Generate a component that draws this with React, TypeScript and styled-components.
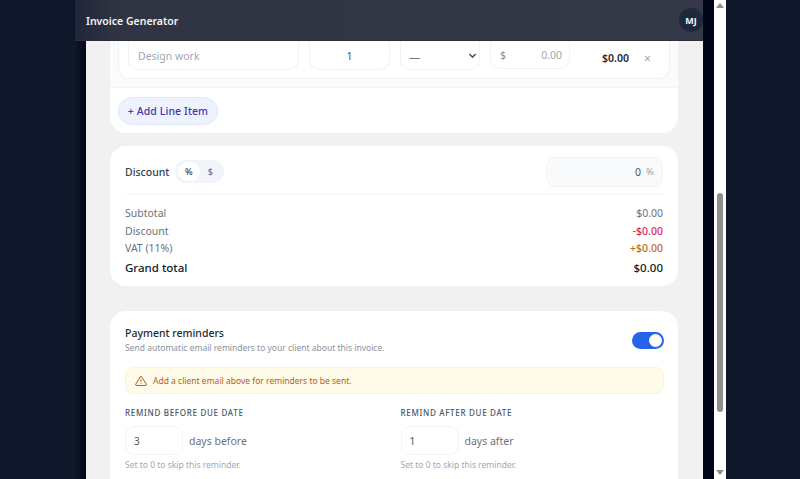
import React from "react";
import styled, { createGlobalStyle } from "styled-components";

const Global = createGlobalStyle`
  html, body { margin: 0; padding: 0; height: 100%; overflow: hidden; }
  body { background: #0f172a; font-family: "Noto Sans", "Open Sans", sans-serif; color: #1f2937; }
  * { box-sizing: border-box; }
`;

const Stage = styled.div`
  width: 800px; height: 479px; overflow: hidden; display: flex; background: #0f172a;
`;
const LeftShade = styled.div`
  width: 86px; height: 100%; flex: none;
  background: linear-gradient(90deg, #0f172a 0, #0f172a 74px, #0a1020 80px, #020617 86px);
`;
const Modal = styled.div`
  width: 617px; height: 100%; flex: none; display: flex; flex-direction: column; background: #f1f1f1; position: relative;
`;
const Header = styled.header`
  height: 41px; flex: none; margin-left: -11px; padding: 0 0 0 11px; display: flex; align-items: center;
  justify-content: space-between; background: linear-gradient(90deg, #20263a 0, #2f3342 40px, #353947 100%);
  position: relative; border-bottom: 1px solid #2b2f3b;
`;
const Brand = styled.div`
  font-size: 10.5px; font-weight: 600; color: #f4f5f7; line-height: 14px; margin-top: 1px;
`;
const Avatar = styled.div`
  width: 24px; height: 24px; margin-right: 0; border-radius: 50%; background: #1e293b; color: #f4f6f9;
  font-size: 9px; font-weight: 700; display: flex; align-items: center; justify-content: center;
`;
const Scroll = styled.main`
  flex: 1; min-height: 0; overflow: hidden; padding: 0 25px 0 24px; display: flex; flex-direction: column;
`;
const Card = styled.section`
  background: #fff; border-radius: 16px; flex: none;
`;
const ItemsCard = styled(Card)`
  border-radius: 0 0 16px 16px; height: 92px; margin-bottom: 13px;
`;
const RowsBand = styled.div`
  height: 47px; background: #fafbfc; padding: 0 8px; border-bottom: 1px solid #f3f4f6;
`;
const ItemRow = styled.div`
  height: 38px; background: #fff; border: 1px solid #f0f2f5; border-top: none; border-radius: 0 0 12px 12px;
  padding: 0 9px; display: flex; gap: 10px; align-items: flex-start;
`;
const FieldBox = styled.div<{ $w: number; $h?: number }>`
  width: ${(p) => p.$w}px; height: ${(p) => p.$h ?? 29}px; flex: none; background: #fff; border: 1px solid #f1f3f6;
  border-radius: 0 0 10px 10px; border-top: none; display: flex; align-items: center; font-size: 10px; color: #475569;
`;
const Placeholder = styled.span`
  color: #a3a8b0; padding-left: 9px; font-size: 10.5px; margin-top: 2px;
`;
const Qty = styled.span`
  width: 100%; text-align: center; color: #4b5563; font-size: 10.5px; margin-top: 2px;
`;
const SelectValue = styled.span`
  flex: 1; padding-left: 8px; color: #6b7280; font-size: 11px; margin-top: 2px;
`;
const Chevron = styled.svg`
  width: 9px; height: 9px; margin-right: 2px; margin-top: 0; color: #4b5563; flex: none;
`;
const Currency = styled.span`
  color: #8b9099; padding-left: 9px; font-size: 10.5px;
`;
const PriceValue = styled.span`
  flex: 1; text-align: right; padding-right: 7px; color: #a3a8b0; font-size: 10.5px;
`;
const Amount = styled.span`
  width: 49px; margin-left: 0; text-align: right; font-size: 10.5px; font-weight: 600; color: #1f2937; flex: none; line-height: 14px; margin-top: 10px;
`;
const Remove = styled.span`
  margin-left: 5px; color: #9ca3af; font-size: 12px; line-height: 14px; margin-top: 11px; flex: none;
`;
const AddWrap = styled.div`
  padding: 9px 8px 0;
`;
const AddButton = styled.button`
  width: 100px; height: 28px; padding: 0; border: 1px solid #dfe5fa; border-radius: 14px; background: #eef2ff;
  color: #4338a8; font: 500 10.5px "Noto Sans", sans-serif; letter-spacing: 0.1px;
`;
const TotalsCard = styled(Card)`
  height: 140px; padding: 11px 15px 0; margin-bottom: 25px;
`;
const DiscountRow = styled.div`
  height: 38px; display: flex; align-items: center; border-bottom: 1px solid #f3f4f6; padding-bottom: 8px;
`;
const DiscountLabel = styled.span`
  font-size: 10.5px; font-weight: 500; color: #374151; width: 50px; flex: none;
`;
const Segmented = styled.div`
  width: 49px; height: 23px; border-radius: 12px; background: #f1f5f9; padding: 2px 3px; display: flex;
`;
const Segment = styled.span<{ $on?: boolean }>`
  flex: 1; border-radius: 10px; background: ${(p) => (p.$on ? "#fff" : "transparent")};
  color: ${(p) => (p.$on ? "#374151" : "#64748b")}; font-size: 9px; font-weight: 500;
  display: flex; align-items: center; justify-content: center;
`;
const DiscountInput = styled.div`
  margin-left: auto; width: 117px; height: 30px; border-radius: 10px; background: #f8fafc; border: 1px solid #f1f3f6;
  display: flex; align-items: center; justify-content: flex-end; gap: 5px; padding-right: 8px;
`;
const DiscountValue = styled.span`
  font-size: 10.5px; color: #4b5563;
`;
const DiscountUnit = styled.span`
  font-size: 9.5px; color: #9ca3af;
`;
const SumRows = styled.div`
  padding-top: 9px; display: flex; flex-direction: column;
`;
const SumRow = styled.div<{ $grand?: boolean }>`
  display: flex; justify-content: space-between; align-items: center; height: ${(p) => (p.$grand ? "20px" : "17.7px")};
  font-size: ${(p) => (p.$grand ? "11.5px" : "10.5px")}; font-weight: ${(p) => (p.$grand ? 500 : 400)};
  color: ${(p) => (p.$grand ? "#111827" : "#6b7280")};
`;
const SumValue = styled.span<{ $c?: string; $w?: number }>`
  color: ${(p) => p.$c ?? "inherit"}; font-weight: ${(p) => p.$w ?? "inherit"};
`;
const RemindersCard = styled(Card)`
  height: 200px; padding: 15px 14px 0 15px;
`;
const RemindHead = styled.div`
  display: flex; justify-content: space-between; align-items: center; height: 29px;
`;
const RemindTitle = styled.div`
  font-size: 10.5px; font-weight: 500; color: #1f2937; line-height: 15px;
`;
const RemindSub = styled.div`
  font-size: 8.5px; color: #8b929c; line-height: 14px;
`;
const Toggle = styled.div`
  width: 32px; height: 17px; border-radius: 9px; background: #2563eb; padding: 2px; display: flex; justify-content: flex-end;
`;
const Knob = styled.span`
  width: 13px; height: 13px; border-radius: 50%; background: #fff; display: block;
`;
const Alert = styled.div`
  margin-top: 12px; height: 27px; border-radius: 8px; background: #fefce8; border: 1px solid #fdf6c8;
  display: flex; align-items: center; gap: 6px; padding-left: 9px; font-size: 8.5px; color: #b45f1a;
`;
const AlertIcon = styled.svg`
  width: 12px; height: 12px; flex: none; color: #b45f1a;
`;
const RemindGrid = styled.div`
  display: grid; grid-template-columns: 275.5px 1fr; margin-top: 13px;
`;
const RemindCol = styled.div`
  display: flex; flex-direction: column;
`;
const RemindLabel = styled.div`
  font-size: 8px; font-weight: 500; letter-spacing: 0.7px; color: #4b5563; line-height: 12px; text-transform: uppercase;
`;
const RemindLine = styled.div`
  display: flex; align-items: center; gap: 6px; margin-top: 7px;
`;
const DaysInput = styled.div`
  width: 58px; height: 29px; border-radius: 9px; border: 1px solid #f1f3f6; display: flex; align-items: center;
  padding-left: 8px; font-size: 10px; color: #4b5563;
`;
const DaysText = styled.span`
  font-size: 10.5px; color: #6b7280;
`;
const Help = styled.div`
  font-size: 8.5px; color: #a3a8b0; margin-top: 4px; line-height: 12px;
`;
const RightShade = styled.div`
  width: 11px; height: 100%; flex: none; background: #020617;
`;
const ScrollTrack = styled.div`
  width: 12px; height: 100%; flex: none; background: #fff; display: flex; flex-direction: column; align-items: center; padding-top: 3px;
`;
const ArrowUp = styled.span`
  width: 0; height: 0; border-left: 4px solid transparent; border-right: 4px solid transparent; border-bottom: 5px solid #8f8f8f; flex: none;
`;
const ArrowDown = styled.span`
  width: 0; height: 0; border-left: 4px solid transparent; border-right: 4px solid transparent; border-top: 5px solid #8f8f8f; flex: none; margin-top: 58px;
`;
const Thumb = styled.span`
  width: 6px; height: 219px; margin-top: 185px; border-radius: 3px; background: #8f8f8f; flex: none;
`;

export default function App() {
  return (
    <Stage>
      <Global />
      <LeftShade />
      <Modal>
        <Header>
          <Brand>Invoice Generator</Brand>
          <Avatar>MJ</Avatar>
        </Header>
        <Scroll>
          <ItemsCard>
            <RowsBand>
              <ItemRow>
                <FieldBox $w={171}><Placeholder>Design work</Placeholder></FieldBox>
                <FieldBox $w={81}><Qty>1</Qty></FieldBox>
                <FieldBox $w={80}>
                  <SelectValue>—</SelectValue>
                  <Chevron viewBox="0 0 10 10" fill="none" stroke="currentColor" strokeWidth="1.6"><path d="M1.5 3.2 5 6.8l3.5-3.6" /></Chevron>
                </FieldBox>
                <FieldBox $w={80} $h={28}><Currency>$</Currency><PriceValue>0.00</PriceValue></FieldBox>
                <Amount>$0.00</Amount>
                <Remove>×</Remove>
              </ItemRow>
            </RowsBand>
            <AddWrap><AddButton>+ Add Line Item</AddButton></AddWrap>
          </ItemsCard>
          <TotalsCard>
            <DiscountRow>
              <DiscountLabel>Discount</DiscountLabel>
              <Segmented><Segment $on>%</Segment><Segment>$</Segment></Segmented>
              <DiscountInput><DiscountValue>0</DiscountValue><DiscountUnit>%</DiscountUnit></DiscountInput>
            </DiscountRow>
            <SumRows>
              <SumRow><span>Subtotal</span><SumValue>$0.00</SumValue></SumRow>
              <SumRow><span>Discount</span><SumValue $c="#e11d5f" $w={500}>-$0.00</SumValue></SumRow>
              <SumRow><span>VAT (11%)</span><SumValue $c="#c2691f" $w={500}>+$0.00</SumValue></SumRow>
              <SumRow $grand><span>Grand total</span><SumValue>$0.00</SumValue></SumRow>
            </SumRows>
          </TotalsCard>
          <RemindersCard>
            <RemindHead>
              <div>
                <RemindTitle>Payment reminders</RemindTitle>
                <RemindSub>Send automatic email reminders to your client about this invoice.</RemindSub>
              </div>
              <Toggle><Knob /></Toggle>
            </RemindHead>
            <Alert>
              <AlertIcon viewBox="0 0 24 24" fill="none" stroke="currentColor" strokeWidth="2" strokeLinecap="round" strokeLinejoin="round">
                <path d="M10.3 3.9 1.8 18a2 2 0 0 0 1.7 3h17a2 2 0 0 0 1.7-3L13.7 3.9a2 2 0 0 0-3.4 0z" />
                <path d="M12 9v4M12 17h.01" />
              </AlertIcon>
              Add a client email above for reminders to be sent.
            </Alert>
            <RemindGrid>
              <RemindCol>
                <RemindLabel>Remind before due date</RemindLabel>
                <RemindLine><DaysInput>3</DaysInput><DaysText>days before</DaysText></RemindLine>
                <Help>Set to 0 to skip this reminder.</Help>
              </RemindCol>
              <RemindCol>
                <RemindLabel>Remind after due date</RemindLabel>
                <RemindLine><DaysInput>1</DaysInput><DaysText>days after</DaysText></RemindLine>
                <Help>Set to 0 to skip this reminder.</Help>
              </RemindCol>
            </RemindGrid>
          </RemindersCard>
        </Scroll>
      </Modal>
      <RightShade />
      <ScrollTrack>
        <ArrowUp />
        <Thumb />
        <ArrowDown />
      </ScrollTrack>
    </Stage>
  );
}
